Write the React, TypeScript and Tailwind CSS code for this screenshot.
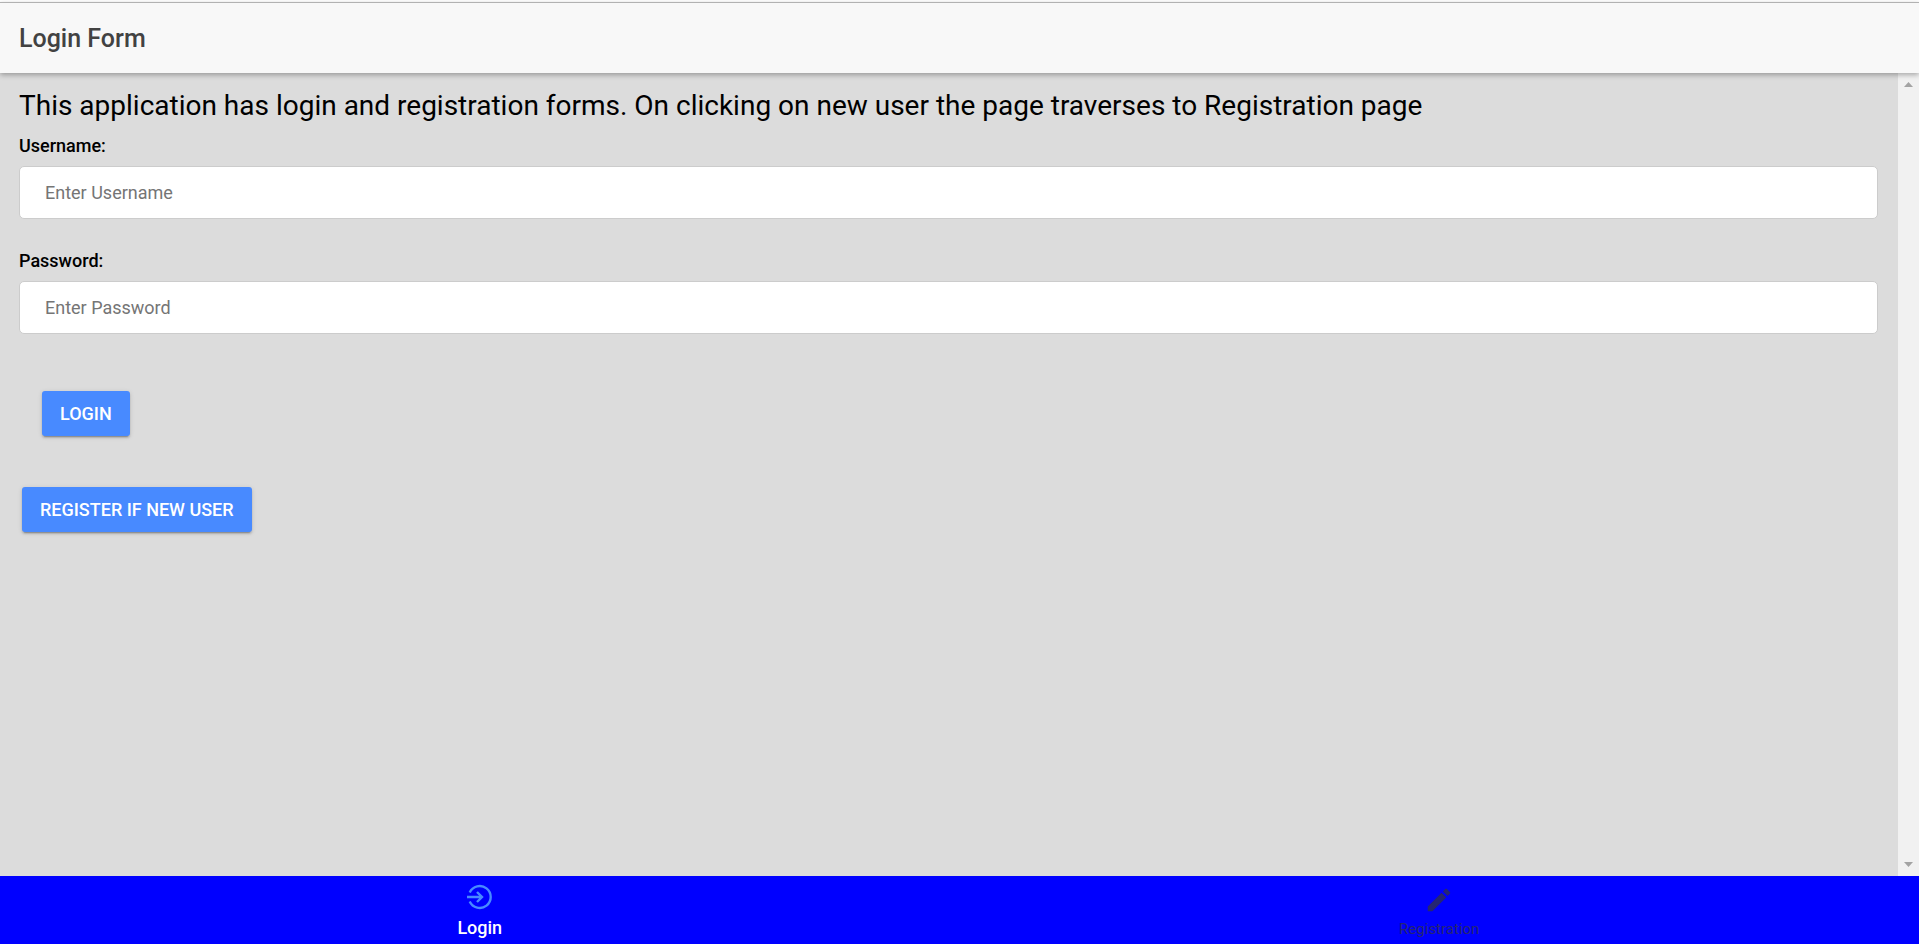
import { useState } from "react";

const fieldClass =
  "block h-[53px] w-full rounded-[5px] border border-[#cccccc] bg-white px-[25px] text-[18px] text-black outline-none placeholder:text-[#757575]";
const buttonClass =
  "h-[45px] cursor-pointer rounded-[3px] bg-[#488aff] px-[18px] text-[18px] font-medium text-white uppercase shadow-[0_2px_2px_0_rgba(0,0,0,0.14),0_3px_1px_-2px_rgba(0,0,0,0.2),0_1px_5px_0_rgba(0,0,0,0.12)]";

function LoginIcon() {
  return (
    <svg width="26" height="26" viewBox="0 0 26 26" fill="none" stroke="#488aff" strokeWidth="2.4" aria-hidden="true">
      <path d="M2.700 8.400A11 11 0 1 1 2.700 17.600" />
      <path d="M0 13H15M10 8l5 5-5 5" />
    </svg>
  );
}

function CreateIcon() {
  return (
    <svg width="30" height="30" viewBox="0 0 512 512" fill="#262673" aria-hidden="true">
      <path d="M64 368v80h80l235.727-235.729-79.999-79.998L64 368zm377.602-217.602c8.531-8.531 8.531-21.334 0-29.865l-50.135-50.135c-8.531-8.531-21.334-8.531-29.865 0l-39.468 39.469 79.999 79.998 39.469-39.467z" />
    </svg>
  );
}

export default function App() {
  const [username, setUsername] = useState("");
  const [password, setPassword] = useState("");

  return (
    <div className="flex h-screen flex-col bg-white pt-[2px] font-[Roboto,sans-serif] text-black">
      <header className="z-10 flex h-[71px] shrink-0 items-center border-t border-[#b2b2b2] bg-[#f8f8f8] px-[19px] pt-[2px] shadow-[0_2px_5px_rgba(0,0,0,0.3)]">
        <h1 className="text-[25px] leading-[30px] font-medium text-[#424242]">Login Form</h1>
      </header>

      <div className="flex min-h-0 grow">
        <main className="grow overflow-hidden bg-[#dcdcdc] pt-[17px] pr-5 pl-[19px]">
          <h2 className="text-[28px] leading-8 font-normal">
            This application has login and registration forms. On clicking on new user the page traverses to
            Registration page
          </h2>
          <form onSubmit={(event) => event.preventDefault()}>
            <div className="pt-[14px]">
              <label htmlFor="username" className="mb-[10px] block text-[18px] leading-5 font-medium">
                Username:
              </label>
              <input
                id="username"
                type="text"
                placeholder="Enter Username"
                value={username}
                onChange={(event) => setUsername(event.target.value)}
                className={fieldClass}
              />
            </div>
            <div className="pt-8">
              <label htmlFor="password" className="mb-[10px] block text-[18px] leading-5 font-medium">
                Password:
              </label>
              <input
                id="password"
                type="password"
                placeholder="Enter Password"
                value={password}
                onChange={(event) => setPassword(event.target.value)}
                className={fieldClass}
              />
            </div>
            <div className="flex flex-col items-start gap-[51px] pt-[57px]">
              <button type="submit" className={`${buttonClass} ml-[23px]`}>
                Login
              </button>
              <button type="button" className={`${buttonClass} ml-[3px]`}>
                Register if new user
              </button>
            </div>
          </form>
        </main>
        <div className="flex w-[21px] shrink-0 flex-col items-center justify-between bg-[#f1f1f1] py-[9px]" aria-hidden="true">
          <svg width="9" height="5" viewBox="0 0 9 5" fill="#a3a3a3">
            <path d="M4.500 0 9 5H0z" />
          </svg>
          <svg width="9" height="5" viewBox="0 0 9 5" fill="#a3a3a3">
            <path d="M0 0h9L4.500 5z" />
          </svg>
        </div>
      </div>

      <nav className="grid h-[68px] shrink-0 grid-cols-2 bg-[#0000ff]">
        <a href="#login" className="flex flex-col items-center justify-end gap-2 pb-[6px] text-white">
          <LoginIcon />
          <span className="text-[18px] leading-5 font-medium">Login</span>
        </a>
        <a href="#registration" className="flex flex-col items-center justify-end gap-[5px] pb-[6px] text-[#262673]">
          <CreateIcon />
          <span className="text-[15px] leading-[18px]">Registration</span>
        </a>
      </nav>
    </div>
  );
}
